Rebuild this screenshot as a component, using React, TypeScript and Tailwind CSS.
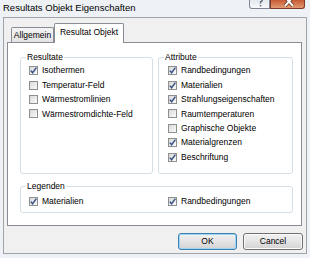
import React from 'react';

const resultate = [
  { label: 'Isothermen', checked: true },
  { label: 'Temperatur-Feld', checked: false },
  { label: 'Wärmestromlinien', checked: false },
  { label: 'Wärmestromdichte-Feld', checked: false },
];

const attribute = [
  { label: 'Randbedingungen', checked: true },
  { label: 'Materialien', checked: true },
  { label: 'Strahlungseigenschaften', checked: true },
  { label: 'Raumtemperaturen', checked: false },
  { label: 'Graphische Objekte', checked: false },
  { label: 'Materialgrenzen', checked: true },
  { label: 'Beschriftung', checked: true },
];

function CheckBox({ label, checked }: { label: string; checked: boolean }) {
  return (
    <div className="flex items-center h-[14.4px] gap-[4px]">
      <span className="relative w-[9px] h-[9px] shrink-0 border border-[#8e8f8f] bg-gradient-to-br from-[#d9d9d9] to-[#fbfbfb]">
        {checked && (
          <svg viewBox="0 0 9 9" className="absolute -left-[1px] -top-[1px] w-[9px] h-[9px]">
            <path d="M1.8 4.6 L3.6 6.8 L7.4 1.6" fill="none" stroke="#3b5488" strokeWidth="1.5" />
          </svg>
        )}
      </span>
      <span className="leading-none whitespace-nowrap">{label}</span>
    </div>
  );
}

function GroupBox({ title, className, children }: { title: string; className: string; children: React.ReactNode }) {
  return (
    <div className={`relative border border-[#d5dfe5] rounded-[3px] ${className}`}>
      <span className="absolute -top-[6px] left-[5px] bg-white px-[1px] leading-[11px]">{title}</span>
      {children}
    </div>
  );
}

export default function App() {
  return (
    <div className="w-[310px] h-[258px] overflow-hidden bg-[#eef2f7] flex flex-col font-['Liberation_Sans',Arial,sans-serif] text-[8.5px] text-black">
      {/* title bar */}
      <div className="h-[17px] flex items-start shrink-0">
        <span className="pl-[3px] pt-[2px] text-[9.5px] leading-[11px]">Resultats Objekt Eigenschaften</span>
        <div className="ml-auto mr-[5px] flex">
          <div className="relative w-[21px] h-[9px] overflow-hidden rounded-bl-[3px] border border-t-0 border-[#7d8692] bg-gradient-to-b from-[#e4e9ef] to-[#f7f8fa]">
            {/* help glyph, top cut off by the crop */}
            <svg viewBox="0 0 8 10" className="absolute left-[6px] -top-[3px] w-[8px] h-[10px]">
              <path d="M1.5 2.5 Q1.5 0.5 4 0.5 Q6.5 0.5 6.5 2.5 Q6.5 4 4.5 5 L4.5 6.5" fill="none" stroke="#5a6573" strokeWidth="1.4" />
              <rect x="3.8" y="8" width="1.4" height="1.4" fill="#5a6573" />
            </svg>
          </div>
          <div className="relative w-[35px] h-[9px] overflow-hidden rounded-br-[3px] border border-t-0 border-[#7a3a25] bg-gradient-to-b from-[#c65a34] to-[#e19a72]">
            <svg viewBox="0 0 12 10" className="absolute left-[12px] -top-[3px] w-[12px] h-[10px]">
              <path d="M2 0 L10 9 M10 0 L2 9" stroke="#5a2a1a" strokeWidth="3.4" />
              <path d="M2 0 L10 9 M10 0 L2 9" stroke="#ffffff" strokeWidth="2" />
            </svg>
          </div>
        </div>
      </div>

      {/* client area */}
      <div className="mx-[3px] mb-[4px] flex-1 border border-[#a0a3a8] bg-[#f0f0f0] flex flex-col">
        {/* tabs */}
        <div className="relative z-10 -mb-px flex items-end h-[25px] pl-[7px]">
          <div className="mb-[1px] w-[43px] h-[15px] flex items-center justify-center border border-b-0 border-[#898c95] rounded-t-[2px] bg-gradient-to-b from-[#f4f4f4] to-[#e3e3e3]">
            <span className="leading-none pt-[1px]">Allgemein</span>
          </div>
          <div className="w-[70px] h-[20px] flex items-start justify-center pt-[4px] border border-b-0 border-[#898c95] rounded-t-[2px] bg-white">
            <span className="leading-none">Resultat Objekt</span>
          </div>
        </div>

        {/* tab page */}
        <div className="ml-[3px] mr-[4px] h-[184px] border border-[#898c95] bg-white pt-[14px] pl-[12px] pr-[8px]">
          <div className="flex gap-[5px]">
            <GroupBox title="Resultate" className="w-[133px] h-[117px] pt-[5.5px] pl-[8px]">
              {resultate.map((r) => (
                <CheckBox key={r.label} label={r.label} checked={r.checked} />
              ))}
            </GroupBox>
            <GroupBox title="Attribute" className="w-[135px] h-[117px] pt-[5.5px] pl-[9px]">
              {attribute.map((r) => (
                <CheckBox key={r.label} label={r.label} checked={r.checked} />
              ))}
            </GroupBox>
          </div>
          <GroupBox title="Legenden" className="mt-[12px] w-[273px] h-[27px] pt-[7.5px] flex">
            <div className="w-[138px] pl-[8px]">
              <CheckBox label="Materialien" checked />
            </div>
            <div className="pl-[9px]">
              <CheckBox label="Randbedingungen" checked />
            </div>
          </GroupBox>
        </div>

        {/* buttons */}
        <div className="mt-[7px] flex justify-end gap-[6px] pr-[3px]">
          <button className="w-[59px] h-[17px] rounded-[3px] border border-[#3c7fb1] bg-gradient-to-b from-[#f2f2f2] via-[#e4e4e4] to-[#d3d3d3] shadow-[inset_0_0_0_1px_#9fd5f0] leading-none">
            OK
          </button>
          <button className="w-[60px] h-[17px] rounded-[3px] border border-[#707070] bg-gradient-to-b from-[#f2f2f2] via-[#e4e4e4] to-[#d3d3d3] shadow-[inset_0_0_0_1px_#fbfbfb] leading-none">
            Cancel
          </button>
        </div>
      </div>
    </div>
  );
}
